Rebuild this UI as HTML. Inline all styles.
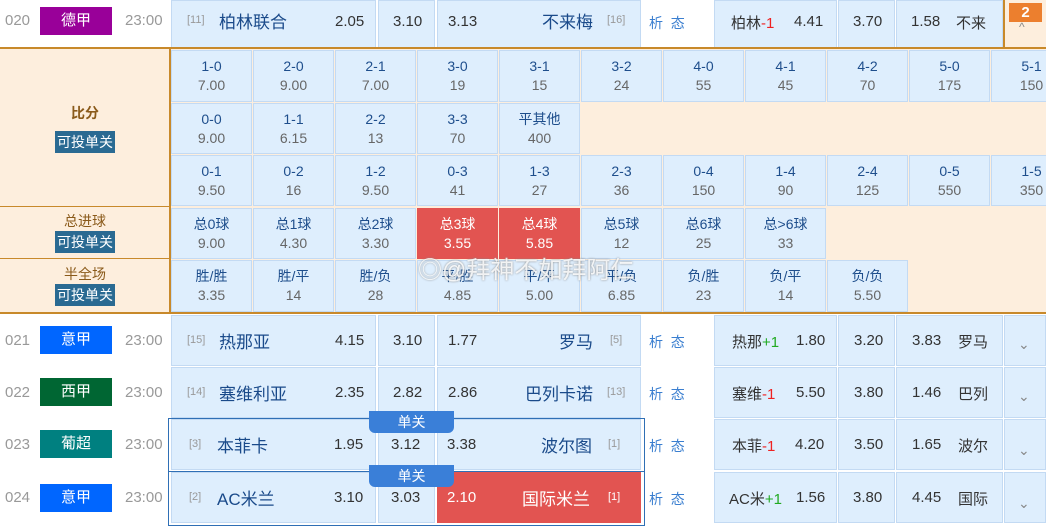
<!DOCTYPE html>
<html><head><meta charset="utf-8"><style>
*{margin:0;padding:0;box-sizing:border-box}
body{width:1046px;height:527px;overflow:hidden;background:#fff;position:relative;font-family:"Liberation Sans","Noto Sans CJK SC",sans-serif;}
.a{position:absolute}
.c{position:absolute;background:#deeefd;box-shadow:inset 0 0 0 1px #c3daf3;}
.g{position:absolute;width:81px;text-align:center;font-size:14px;line-height:19px;background:#deeefd;box-shadow:inset 0 0 0 1px #c3daf3;padding-top:7px}
.g b{display:block;font-weight:normal;color:#1e4e8c}
.g i{display:block;font-style:normal;color:#666}
.r{background:#e25451;box-shadow:none}
.r b,.r i{color:#fff}
.num{position:absolute;color:#999;font-size:15px}
.lg{position:absolute;left:40px;width:72px;height:28px;color:#fff;font-size:15px;text-align:center;line-height:27px}
.tm{position:absolute;left:125px;color:#999;font-size:15px}
.t{position:absolute;font-size:17px;color:#1a4a8a;margin-top:-2px}
.o{position:absolute;font-size:15px;color:#333}
.s{position:absolute;font-size:11px;color:#999}
.x{position:absolute;font-size:14px;color:#3b7fd0;left:649px}
.h{position:absolute;font-size:15px;color:#333;margin-top:-1px}
.lab{position:absolute;left:0;width:170px;text-align:center;font-size:14px;color:#8a5a1a}
.btn{display:inline-block;background:#2a6a92;color:#fff;font-size:14px;padding:1px 2px;line-height:20px}
.arr{position:absolute;left:1018px;color:#888;font-size:14px}
</style></head><body>

<!-- row 020 -->
<div class="num" style="left:5px;top:12px">020</div>
<div class="lg" style="top:7px;background:#990099">德甲</div>
<div class="tm" style="top:12px">23:00</div>
<div class="c" style="left:171px;top:0;width:205px;height:48px"></div>
<div class="c" style="left:378px;top:0;width:57px;height:48px"></div>
<div class="c" style="left:437px;top:0;width:204px;height:48px"></div>
<div class="s" style="left:187px;top:14px">[11]</div>
<div class="t" style="left:219px;top:10px">柏林联合</div>
<div class="o" style="left:335px;top:13px">2.05</div>
<div class="o" style="left:393px;top:13px">3.10</div>
<div class="o" style="left:448px;top:13px">3.13</div>
<div class="t" style="left:542px;top:10px">不来梅</div>
<div class="s" style="left:607px;top:14px">[16]</div>
<div class="x" style="top:13px">析&nbsp;&nbsp;态</div>
<div class="c" style="left:714px;top:0;width:123px;height:48px"></div>
<div class="c" style="left:838px;top:0;width:57px;height:48px"></div>
<div class="c" style="left:896px;top:0;width:107px;height:48px"></div>
<div class="h" style="left:731px;top:13px">柏林<span style="color:#e22">-1</span></div>
<div class="o" style="left:794px;top:13px">4.41</div>
<div class="o" style="left:853px;top:13px">3.70</div>
<div class="o" style="left:911px;top:13px">1.58</div>
<div class="h" style="left:956px;top:13px">不来</div>
<div class="a" style="left:1003px;top:0;width:43px;height:48px;background:#fdeedd;border-left:2px solid #c8892a"></div>
<div class="a" style="left:1009px;top:3px;width:33px;height:19px;background:#ec7f2e;color:#fff;font-weight:bold;text-align:center;font-size:15px;line-height:19px">2</div>
<div class="a" style="left:1019px;top:20px;color:#888;font-size:12px">^</div>

<!-- score panel -->
<div class="a" style="left:0;top:47px;width:1046px;height:267px;background:#fdeedd;border-top:2px solid #c8892a;border-bottom:2px solid #c8892a"></div>
<div class="a" style="left:169px;top:49px;width:2px;height:264px;background:#c8892a"></div>
<div class="a" style="left:0;top:206px;width:170px;height:1px;background:#c8892a"></div>
<div class="a" style="left:0;top:258px;width:170px;height:1px;background:#c8892a"></div>
<div class="lab" style="top:103px;font-weight:bold">比分</div>
<div class="lab" style="top:131px"><span class="btn">可投单关</span></div>
<div class="lab" style="top:211px">总进球</div>
<div class="lab" style="top:231px"><span class="btn">可投单关</span></div>
<div class="lab" style="top:264px">半全场</div>
<div class="lab" style="top:284px"><span class="btn">可投单关</span></div>

<div class="g" style="left:171px;top:50px;height:52px"><b>1-0</b><i>7.00</i></div>
<div class="g" style="left:253px;top:50px;height:52px"><b>2-0</b><i>9.00</i></div>
<div class="g" style="left:335px;top:50px;height:52px"><b>2-1</b><i>7.00</i></div>
<div class="g" style="left:417px;top:50px;height:52px"><b>3-0</b><i>19</i></div>
<div class="g" style="left:499px;top:50px;height:52px"><b>3-1</b><i>15</i></div>
<div class="g" style="left:581px;top:50px;height:52px"><b>3-2</b><i>24</i></div>
<div class="g" style="left:663px;top:50px;height:52px"><b>4-0</b><i>55</i></div>
<div class="g" style="left:745px;top:50px;height:52px"><b>4-1</b><i>45</i></div>
<div class="g" style="left:827px;top:50px;height:52px"><b>4-2</b><i>70</i></div>
<div class="g" style="left:909px;top:50px;height:52px"><b>5-0</b><i>175</i></div>
<div class="g" style="left:991px;top:50px;height:52px"><b>5-1</b><i>150</i></div>

<div class="g" style="left:171px;top:103px;height:51px"><b>0-0</b><i>9.00</i></div>
<div class="g" style="left:253px;top:103px;height:51px"><b>1-1</b><i>6.15</i></div>
<div class="g" style="left:335px;top:103px;height:51px"><b>2-2</b><i>13</i></div>
<div class="g" style="left:417px;top:103px;height:51px"><b>3-3</b><i>70</i></div>
<div class="g" style="left:499px;top:103px;height:51px"><b>平其他</b><i>400</i></div>

<div class="g" style="left:171px;top:155px;height:51px"><b>0-1</b><i>9.50</i></div>
<div class="g" style="left:253px;top:155px;height:51px"><b>0-2</b><i>16</i></div>
<div class="g" style="left:335px;top:155px;height:51px"><b>1-2</b><i>9.50</i></div>
<div class="g" style="left:417px;top:155px;height:51px"><b>0-3</b><i>41</i></div>
<div class="g" style="left:499px;top:155px;height:51px"><b>1-3</b><i>27</i></div>
<div class="g" style="left:581px;top:155px;height:51px"><b>2-3</b><i>36</i></div>
<div class="g" style="left:663px;top:155px;height:51px"><b>0-4</b><i>150</i></div>
<div class="g" style="left:745px;top:155px;height:51px"><b>1-4</b><i>90</i></div>
<div class="g" style="left:827px;top:155px;height:51px"><b>2-4</b><i>125</i></div>
<div class="g" style="left:909px;top:155px;height:51px"><b>0-5</b><i>550</i></div>
<div class="g" style="left:991px;top:155px;height:51px"><b>1-5</b><i>350</i></div>

<div class="g" style="left:171px;top:208px;height:51px"><b>总0球</b><i>9.00</i></div>
<div class="g" style="left:253px;top:208px;height:51px"><b>总1球</b><i>4.30</i></div>
<div class="g" style="left:335px;top:208px;height:51px"><b>总2球</b><i>3.30</i></div>
<div class="g r" style="left:417px;top:208px;height:51px"><b>总3球</b><i>3.55</i></div>
<div class="g r" style="left:499px;top:208px;height:51px"><b>总4球</b><i>5.85</i></div>
<div class="g" style="left:581px;top:208px;height:51px"><b>总5球</b><i>12</i></div>
<div class="g" style="left:663px;top:208px;height:51px"><b>总6球</b><i>25</i></div>
<div class="g" style="left:745px;top:208px;height:51px"><b>总&gt;6球</b><i>33</i></div>

<div class="g" style="left:171px;top:260px;height:52px"><b>胜/胜</b><i>3.35</i></div>
<div class="g" style="left:253px;top:260px;height:52px"><b>胜/平</b><i>14</i></div>
<div class="g" style="left:335px;top:260px;height:52px"><b>胜/负</b><i>28</i></div>
<div class="g" style="left:417px;top:260px;height:52px"><b>平/胜</b><i>4.85</i></div>
<div class="g" style="left:499px;top:260px;height:52px"><b>平/平</b><i>5.00</i></div>
<div class="g" style="left:581px;top:260px;height:52px"><b>平/负</b><i>6.85</i></div>
<div class="g" style="left:663px;top:260px;height:52px"><b>负/胜</b><i>23</i></div>
<div class="g" style="left:745px;top:260px;height:52px"><b>负/平</b><i>14</i></div>
<div class="g" style="left:827px;top:260px;height:52px"><b>负/负</b><i>5.50</i></div>

<div class="a" style="left:418px;top:250px;font-size:24px;color:rgba(255,255,255,0.85);text-shadow:0 0 2px #888">◎@拜神不如拜阿仁</div>

<!-- 021 -->
<div class="num" style="left:5px;top:332px">021</div>
<div class="lg" style="top:326px;background:#0066ff">意甲</div>
<div class="tm" style="top:332px">23:00</div>
<div class="c" style="left:171px;top:315px;width:205px;height:51px"></div>
<div class="c" style="left:378px;top:315px;width:57px;height:51px"></div>
<div class="c" style="left:437px;top:315px;width:204px;height:51px"></div>
<div class="s" style="left:187px;top:334px">[15]</div>
<div class="t" style="left:219px;top:330px">热那亚</div>
<div class="o" style="left:335px;top:332px">4.15</div>
<div class="o" style="left:393px;top:332px">3.10</div>
<div class="o" style="left:448px;top:332px">1.77</div>
<div class="t" style="left:559px;top:330px">罗马</div>
<div class="s" style="left:610px;top:334px">[5]</div>
<div class="x" style="top:332px">析&nbsp;&nbsp;态</div>
<div class="c" style="left:714px;top:315px;width:123px;height:51px"></div>
<div class="c" style="left:838px;top:315px;width:57px;height:51px"></div>
<div class="c" style="left:896px;top:315px;width:107px;height:51px"></div>
<div class="c" style="left:1004px;top:315px;width:42px;height:51px"></div>
<div class="h" style="left:732px;top:332px">热那<span style="color:#2a2">+1</span></div>
<div class="o" style="left:796px;top:332px">1.80</div>
<div class="o" style="left:854px;top:332px">3.20</div>
<div class="o" style="left:912px;top:332px">3.83</div>
<div class="h" style="left:958px;top:332px">罗马</div>
<div class="arr" style="top:336px">⌄</div>

<!-- 022 -->
<div class="num" style="left:5px;top:384px">022</div>
<div class="lg" style="top:378px;background:#006633">西甲</div>
<div class="tm" style="top:384px">23:00</div>
<div class="c" style="left:171px;top:367px;width:205px;height:51px"></div>
<div class="c" style="left:378px;top:367px;width:57px;height:51px"></div>
<div class="c" style="left:437px;top:367px;width:204px;height:51px"></div>
<div class="s" style="left:187px;top:386px">[14]</div>
<div class="t" style="left:219px;top:382px">塞维利亚</div>
<div class="o" style="left:335px;top:384px">2.35</div>
<div class="o" style="left:393px;top:384px">2.82</div>
<div class="o" style="left:448px;top:384px">2.86</div>
<div class="t" style="left:525px;top:382px">巴列卡诺</div>
<div class="s" style="left:607px;top:386px">[13]</div>
<div class="x" style="top:384px">析&nbsp;&nbsp;态</div>
<div class="c" style="left:714px;top:367px;width:123px;height:51px"></div>
<div class="c" style="left:838px;top:367px;width:57px;height:51px"></div>
<div class="c" style="left:896px;top:367px;width:107px;height:51px"></div>
<div class="c" style="left:1004px;top:367px;width:42px;height:51px"></div>
<div class="h" style="left:732px;top:384px">塞维<span style="color:#e22">-1</span></div>
<div class="o" style="left:796px;top:384px">5.50</div>
<div class="o" style="left:854px;top:384px">3.80</div>
<div class="o" style="left:912px;top:384px">1.46</div>
<div class="h" style="left:958px;top:384px">巴列</div>
<div class="arr" style="top:388px">⌄</div>

<!-- 023 -->
<div class="num" style="left:5px;top:436px">023</div>
<div class="lg" style="top:430px;background:#008080">葡超</div>
<div class="tm" style="top:436px">23:00</div>
<div class="c" style="left:171px;top:419px;width:205px;height:51px"></div>
<div class="c" style="left:378px;top:419px;width:57px;height:51px"></div>
<div class="c" style="left:437px;top:419px;width:204px;height:51px"></div>
<div class="s" style="left:189px;top:438px">[3]</div>
<div class="t" style="left:217px;top:434px">本菲卡</div>
<div class="o" style="left:334px;top:436px">1.95</div>
<div class="o" style="left:391px;top:436px">3.12</div>
<div class="o" style="left:447px;top:436px">3.38</div>
<div class="t" style="left:541px;top:434px">波尔图</div>
<div class="s" style="left:608px;top:438px">[1]</div>
<div class="x" style="top:436px">析&nbsp;&nbsp;态</div>
<div class="c" style="left:714px;top:419px;width:123px;height:51px"></div>
<div class="c" style="left:838px;top:419px;width:57px;height:51px"></div>
<div class="c" style="left:896px;top:419px;width:107px;height:51px"></div>
<div class="c" style="left:1004px;top:419px;width:42px;height:51px"></div>
<div class="h" style="left:732px;top:436px">本菲<span style="color:#e22">-1</span></div>
<div class="o" style="left:795px;top:436px">4.20</div>
<div class="o" style="left:854px;top:436px">3.50</div>
<div class="o" style="left:912px;top:436px">1.65</div>
<div class="h" style="left:958px;top:436px">波尔</div>
<div class="arr" style="top:442px">⌄</div>

<!-- 024 -->
<div class="num" style="left:5px;top:489px">024</div>
<div class="lg" style="top:484px;background:#0066ff">意甲</div>
<div class="tm" style="top:489px">23:00</div>
<div class="c" style="left:171px;top:472px;width:205px;height:51px"></div>
<div class="c" style="left:378px;top:472px;width:57px;height:51px"></div>
<div class="c r" style="left:437px;top:472px;width:204px;height:51px"></div>
<div class="s" style="left:189px;top:491px">[2]</div>
<div class="t" style="left:217px;top:487px">AC米兰</div>
<div class="o" style="left:334px;top:489px">3.10</div>
<div class="o" style="left:391px;top:489px">3.03</div>
<div class="o" style="left:447px;top:489px;color:#fff">2.10</div>
<div class="t" style="left:522px;top:487px;color:#fff">国际米兰</div>
<div class="s" style="left:608px;top:491px;color:#fff">[1]</div>
<div class="x" style="top:489px">析&nbsp;&nbsp;态</div>
<div class="c" style="left:714px;top:472px;width:123px;height:51px"></div>
<div class="c" style="left:838px;top:472px;width:57px;height:51px"></div>
<div class="c" style="left:896px;top:472px;width:107px;height:51px"></div>
<div class="c" style="left:1004px;top:472px;width:42px;height:51px"></div>
<div class="h" style="left:729px;top:489px">AC米<span style="color:#2a2">+1</span></div>
<div class="o" style="left:796px;top:489px">1.56</div>
<div class="o" style="left:853px;top:489px">3.80</div>
<div class="o" style="left:912px;top:489px">4.45</div>
<div class="h" style="left:958px;top:489px">国际</div>
<div class="arr" style="top:495px">⌄</div>

<div class="a" style="left:168px;top:418px;width:477px;height:54px;border:1px solid #2f6fb5"></div>
<div class="a" style="left:168px;top:471px;width:477px;height:55px;border:1px solid #2f6fb5"></div>
<div class="a" style="left:369px;top:411px;width:85px;height:22px;background:#3a7fd8;color:#fff;font-size:14px;text-align:center;line-height:22px;border-radius:0 0 6px 6px">单关</div>
<div class="a" style="left:369px;top:465px;width:85px;height:22px;background:#3a7fd8;color:#fff;font-size:14px;text-align:center;line-height:22px;border-radius:0 0 6px 6px">单关</div>
</body></html>
